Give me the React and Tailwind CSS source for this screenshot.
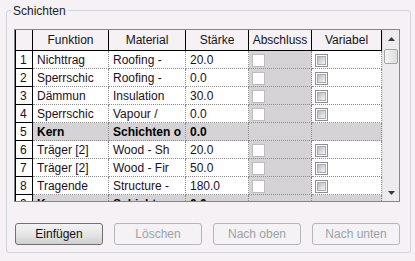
import React from "react";

const rows = [
  { n: "1", f: "Nichttrag", m: "Roofing -", s: "20.0" },
  { n: "2", f: "Sperrschic", m: "Roofing -", s: "0.0" },
  { n: "3", f: "Dämmun", m: "Insulation", s: "30.0" },
  { n: "4", f: "Sperrschic", m: "Vapour /", s: "0.0" },
  { n: "5", f: "Kern", m: "Schichten o", s: "0.0", core: true },
  { n: "6", f: "Träger [2]", m: "Wood - Sh", s: "20.0" },
  { n: "7", f: "Träger [2]", m: "Wood - Fir", s: "50.0" },
  { n: "8", f: "Tragende", m: "Structure -", s: "180.0" },
  { n: "9", f: "Kern", m: "Schichten u", s: "0.0", core: true },
];

function DisabledBox() {
  return <div className="w-[13px] h-[13px] border border-[#bdbdbd] bg-white" />;
}

function VarBox() {
  return (
    <div className="w-[13px] h-[13px] border border-[#8e8e8e] bg-white p-[1px]">
      <div className="w-full h-full border border-[#a9abae] bg-linear-to-br from-[#b8bbc0] to-[#f6f6f6]" />
    </div>
  );
}

function Header() {
  const h = "h-[21px] border-r border-b border-black bg-[#f5f1f5] flex items-center justify-center text-[#141414] whitespace-nowrap overflow-hidden";
  return (
    <div className="flex shrink-0">
      <div className={`${h} w-[17px]`} />
      <div className={`${h} w-[76px]`}>Funktion</div>
      <div className={`${h} w-[77px]`}>Material</div>
      <div className={`${h} w-[63px]`}>Stärke</div>
      <div className={`${h} w-[63px]`}>Abschluss</div>
      <div className={`${h} w-[70px]`}>Variabel</div>
    </div>
  );
}

function Row({ r }) {
  const base = "h-[18px] shrink-0 border-r border-b border-dotted border-[#8c8c8c] whitespace-nowrap overflow-hidden";
  const txt = `${base} pl-[4px] flex items-center ${r.core ? "bg-[#d6d3d6] font-bold text-black" : "bg-white text-[#1c0f1e]"}`;
  return (
    <div className="flex shrink-0">
      <div className="w-[17px] h-[18px] shrink-0 border-r border-b border-black bg-white pl-[4px] flex items-center text-[#1c0f1e]">
        {r.n}
      </div>
      <div className={`${txt} w-[76px]`}>{r.f}</div>
      <div className={`${txt} w-[77px]`}>{r.m}</div>
      <div className={`${txt} w-[63px]`}>{r.s}</div>
      <div className={`${base} w-[63px] bg-[#d6d3d6] pl-[3px] pt-[3px]`}>
        {!r.core && <DisabledBox />}
      </div>
      <div className={`${base} w-[70px] pl-[3px] pt-[3px] ${r.core ? "bg-[#d6d3d6]" : "bg-white"}`}>
        {!r.core && <VarBox />}
      </div>
    </div>
  );
}

function Scrollbar() {
  return (
    <div className="w-[17px] h-full bg-[#eeebee] border-l border-[#e2dfe2] flex flex-col items-center">
      <div className="h-[17px] w-full flex items-center justify-center">
        <svg width="7" height="4" viewBox="0 0 7 4">
          <path d="M3.5 0 L7 4 L0 4 Z" fill="#3a3a3a" />
        </svg>
      </div>
      <div className="mt-[2px] w-[14px] h-[15px] rounded-[2px] border border-[#a4a4a4] bg-linear-to-r from-[#f4f4f4] to-[#dcdcdc]" />
      <div className="flex-1" />
      <div className="h-[17px] w-full flex items-center justify-center">
        <svg width="7" height="4" viewBox="0 0 7 4">
          <path d="M0 0 L7 0 L3.5 4 Z" fill="#3a3a3a" />
        </svg>
      </div>
    </div>
  );
}

function Btn({ children, enabled }) {
  return enabled ? (
    <div className="w-[88px] h-[22px] rounded-[3px] border border-[#707070] bg-linear-to-b from-[#f3f3f3] via-[#e6e6e6] to-[#cfcfcf] flex items-center justify-center text-[#111]">
      {children}
    </div>
  ) : (
    <div className="w-[88px] h-[22px] rounded-[3px] border border-[#b4b6b9] bg-[#f4f2f4] flex items-center justify-center text-[#9ea1a6]">
      {children}
    </div>
  );
}

export default function App() {
  return (
    <div className="w-[415px] h-[261px] bg-[#f5f1f5] pt-[10px] pl-[6px] font-['Liberation_Sans',Arial,sans-serif] text-[12px] leading-[14px] overflow-hidden">
      <div className="relative w-[405px] h-[243px] border border-[#d2d4da] rounded-[3px] pt-[18px] pl-[7px]">
        <span className="absolute left-[4px] -top-[7px] px-[2px] bg-[#f5f1f5] text-[#222]">Schichten</span>
        <div className="w-[386px] h-[173px] border border-[#828790] flex overflow-hidden">
          <div className="w-[367px] h-full border-l border-black flex flex-col overflow-hidden">
            <Header />
            {rows.map((r) => (
              <Row key={r.n} r={r} />
            ))}
          </div>
          <Scrollbar />
        </div>
        <div className="mt-[21px] ml-[1px] flex gap-[11px]">
          <Btn enabled>Einfügen</Btn>
          <Btn>Löschen</Btn>
          <Btn>Nach oben</Btn>
          <Btn>Nach unten</Btn>
        </div>
      </div>
    </div>
  );
}
